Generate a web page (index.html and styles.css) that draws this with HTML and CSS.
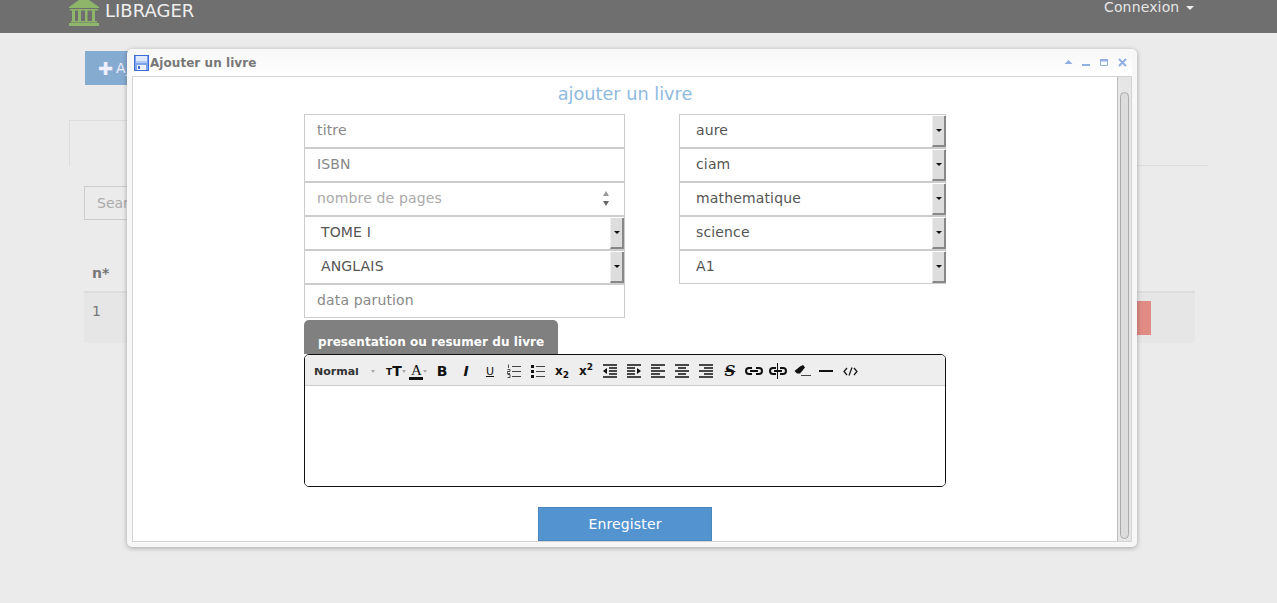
FILE: index.html
```html
<!DOCTYPE html>
<html lang="fr">
<head>
    <meta charset="UTF-8">
    <meta name="viewport" content="width=device-width, initial-scale=1.0">
    <title>Librager</title>
    <link rel="stylesheet" href="styles.css">
</head>
<body>
    <header class="navbar">
        <div class="brand">
            <svg class="brand-icon" width="32" height="26" viewBox="0 0 32 26">
                <path fill="#8fb56b" d="M11 0 L21 0 L31 7 L31 8 L1 8 L1 7 Z"/>
                <rect fill="#8fb56b" x="2" y="9" width="28" height="1.5"/>
                <rect fill="#8fb56b" x="4" y="10" width="3" height="11"/>
                <rect fill="#8fb56b" x="10" y="10" width="3" height="11"/>
                <rect fill="#8fb56b" x="17" y="10" width="2.500" height="11"/>
                <rect fill="#8fb56b" x="24" y="10" width="3" height="11"/>
                <rect fill="#8fb56b" x="3" y="21" width="26" height="1.500"/>
                <rect fill="#8fb56b" x="1" y="23" width="30" height="3"/>
            </svg>
            <span>LIBRAGER</span>
        </div>
        <div class="login">Connexion <span class="caret"></span></div>
    </header>

    <main class="page">
        <button class="add-btn" type="button"><span class="plus">✚</span>Ajouter</button>
        <div class="tabs"><div class="tab"></div></div>
        <input class="search" type="text" placeholder="Search">
        <div class="table-head">n*</div>
        <div class="table-row">
            <span class="row-num">1</span>
            <span class="del-btn"></span>
        </div>
    </main>

    <section class="dialog">
        <div class="dialog-title">
            <svg width="15" height="16" viewBox="0 0 15 16">
                <rect x="0.5" y="0.5" width="14" height="15" fill="#7fa3ec" stroke="#3f6bd8"/>
                <rect x="2" y="1" width="11" height="7" fill="#dfe9fb"/>
                <rect x="2" y="6" width="11" height="2" fill="#b4c9f2"/>
                <rect x="3" y="10" width="9" height="5" fill="#eef2fb"/>
                <rect x="4" y="11" width="2" height="3" fill="#3f6bd8"/>
            </svg>
            <span class="dialog-name">Ajouter un livre</span>
            <div class="dialog-actions">
                <svg width="9" height="9" viewBox="0 0 9 9"><path fill="#8fb0e0" d="M0.5 6 L4.500 2 L8.500 6 Z"/></svg>
                <svg width="9" height="9" viewBox="0 0 9 9"><rect fill="#8fb0e0" y="6" width="8" height="2"/></svg>
                <svg width="9" height="9" viewBox="0 0 9 9"><path fill="none" stroke="#8fb0e0" d="M0.5 1.500 H7.500 V7.500 H0.5 Z"/><rect fill="#8fb0e0" y="1" width="8" height="2.500"/></svg>
                <svg width="9" height="9" viewBox="0 0 9 9"><path fill="none" stroke="#8fb0e0" stroke-width="2" d="M1 1 L8 8 M8 1 L1 8"/></svg>
            </div>
        </div>

        <div class="dialog-body">
            <form class="book-form">
                <h2 class="form-title">ajouter un livre</h2>

                <div class="columns">
                    <div class="col col-left">
                        <input class="field" type="text" placeholder="titre">
                        <input class="field" type="text" placeholder="ISBN">
                        <div class="field spin">
                            <span class="ph">nombre de pages</span>
                            <span class="spin-arrows"><i class="up"></i><i class="down"></i></span>
                        </div>
                        <div class="field pick">TOME I<span class="pick-btn"></span></div>
                        <div class="field pick">ANGLAIS<span class="pick-btn"></span></div>
                        <input class="field" type="text" placeholder="data parution">
                    </div>
                    <div class="col col-right">
                        <div class="field pick">aure<span class="pick-btn"></span></div>
                        <div class="field pick">ciam<span class="pick-btn"></span></div>
                        <div class="field pick">mathematique<span class="pick-btn"></span></div>
                        <div class="field pick">science<span class="pick-btn"></span></div>
                        <div class="field pick">A1<span class="pick-btn"></span></div>
                    </div>
                </div>

                <div class="editor-tab">presentation ou resumer du livre</div>
                <div class="editor">
                    <div class="toolbar">
                        <span class="tb-format">Normal</span>
                        <span class="tb-format-caret"></span>
                        <span class="tb-size"><b class="t-small">T</b><b class="t-big">T</b><i class="mini-caret"></i></span>
                        <span class="tb-color">A<i class="mini-caret"></i></span>
                        <span class="tb tb-bold">B</span>
                        <span class="tb tb-italic">I</span>
                        <span class="tb tb-under">U</span>
                        <span class="tb">
                            <svg width="14" height="14" viewBox="0 0 14 14"><path stroke="#444" d="M5 2.500H14M5 7.500H14M5 12.500H14"/><path stroke="#222" d="M1.500 0.500V4M0.500 5.500H3V7.500H0.500V9.500H3M0.500 10.500H3V13.500H0.500" fill="none" stroke-width=".8"/></svg>
                        </span>
                        <span class="tb">
                            <svg width="14" height="14" viewBox="0 0 14 14"><path stroke="#444" d="M5 2.500H14M5 7.500H14M5 12.500H14"/><path fill="#111" d="M0 1h3v3H0zM0 6h3v3H0zM0 11h3v3H0z"/></svg>
                        </span>
                        <span class="tb tb-script"><span>x<sub>2</sub></span></span>
                        <span class="tb tb-script"><span>x<sup>2</sup></span></span>
                        <span class="tb">
                            <svg width="14" height="14" viewBox="0 0 14 14"><path stroke="#111" stroke-width="1.400" d="M0 1H14M6 4H14M6 7H14M6 10H14M0 13H14"/><path fill="#111" d="M4 4V10L0 7Z"/></svg>
                        </span>
                        <span class="tb">
                            <svg width="14" height="14" viewBox="0 0 14 14"><path stroke="#111" stroke-width="1.400" d="M0 1H14M0 4H8M0 7H8M0 10H8M0 13H14"/><path fill="#111" d="M10 4V10L14 7Z"/></svg>
                        </span>
                        <span class="tb">
                            <svg width="14" height="14" viewBox="0 0 14 14"><path stroke="#111" stroke-width="1.400" d="M0 1H14M0 4H9M0 7H14M0 10H9M0 13H14"/></svg>
                        </span>
                        <span class="tb">
                            <svg width="14" height="14" viewBox="0 0 14 14"><path stroke="#111" stroke-width="1.400" d="M0 1H14M3 4H11M0 7H14M3 10H11M0 13H14"/></svg>
                        </span>
                        <span class="tb">
                            <svg width="14" height="14" viewBox="0 0 14 14"><path stroke="#111" stroke-width="1.400" d="M0 1H14M5 4H14M0 7H14M5 10H14M0 13H14"/></svg>
                        </span>
                        <span class="tb tb-strike">S</span>
                        <span class="tb">
                            <svg width="18" height="8" viewBox="0 0 18 8"><path fill="none" stroke="#111" stroke-width="2" d="M7 1H4a3 3 0 0 0 0 6H7M11 1h3a3 3 0 0 1 0 6H11M5 4H13"/></svg>
                        </span>
                        <span class="tb">
                            <svg width="18" height="16" viewBox="0 0 18 16"><path fill="none" stroke="#111" stroke-width="2" d="M7 5H4a3 3 0 0 0 0 6H7M11 5h3a3 3 0 0 1 0 6H11M5 8H13"/><path stroke="#111" d="M8.500 0V16"/></svg>
                        </span>
                        <span class="tb">
                            <svg width="17" height="12" viewBox="0 0 17 12"><path fill="#111" d="M6 1.500L9 0L11 2.500L6 8.500H3L0.500 6Z"/><path stroke="#444" d="M7 10.500H17"/></svg>
                        </span>
                        <span class="tb">
                            <svg width="14" height="14" viewBox="0 0 14 14"><rect y="6" width="14" height="2" fill="#111"/></svg>
                        </span>
                        <span class="tb">
                            <svg width="15" height="9" viewBox="0 0 15 9"><path fill="none" stroke="#111" stroke-width="1.200" d="M4 1L1 4.500L4 8M11 1L14 4.500L11 8M9 0.500L6 8.500"/></svg>
                        </span>
                    </div>
                    <div class="editor-area"></div>
                </div>

                <div class="form-actions">
                    <button class="save-btn" type="button">Enregister</button>
                </div>
            </form>
            <div class="scrollbar"><div class="thumb"></div></div>
        </div>
    </section>
</body>
</html>
```

FILE: styles.css
```css
/* Base */
html, body {
    margin: 0;
    padding: 0;
    height: 100%;
}

body {
    background: #ebebeb;
    font-family: "DejaVu Sans", sans-serif;
    font-size: 14px;
    color: #555;
    overflow: hidden;
}

/* Navbar */
.navbar {
    display: flex;
    justify-content: space-between;
    height: 33px;
    padding: 0 83px 0 68px;
    background: #6f6f6f;
    color: #eee;
    overflow: hidden;
}

.brand {
    display: flex;
    align-items: flex-start;
    gap: 5px;
    font-size: 18px;
    line-height: 21px;
}

.login {
    line-height: 14px;
    color: #e6e6e6;
    letter-spacing: 0.15px;
}

.caret {
    display: inline-block;
    margin-left: 2px;
    vertical-align: middle;
    border-top: 4px solid #eee;
    border-left: 4px solid transparent;
    border-right: 4px solid transparent;
}

/* Page behind the dialog */
.page {
    padding: 18px 82px 0 84px;
}

.add-btn {
    display: block;
    width: 120px;
    height: 34px;
    margin-left: 1px;
    padding: 0 0 0 13px;
    border: none;
    background: #86abd0;
    color: #eef;
    font: 14px "DejaVu Sans", sans-serif;
    text-align: left;
}

.plus {
    margin-right: 3px;
    font-size: 18px;
    vertical-align: -2px;
}

.tabs {
    height: 45px;
    margin: 35px -13px 0 -15px;
    border-bottom: 1px solid #ddd;
}

.tab {
    width: 100px;
    height: 46px;
    border: 1px solid #ddd;
    border-bottom: none;
    box-sizing: border-box;
    background: #ebebeb;
}

.search {
    display: block;
    box-sizing: border-box;
    width: 200px;
    height: 34px;
    margin-top: 20px;
    padding: 0 12px;
    border: 1px solid #ccc;
    background: #ebebeb;
    font: 14px "DejaVu Sans", sans-serif;
}

.search::placeholder {
    color: #aaa;
}

.table-head {
    height: 73px;
    padding: 0 8px;
    box-sizing: border-box;
    line-height: 106px;
    font-weight: bold;
    color: #777;
    border-bottom: 2px solid #ddd;
}

.table-row {
    display: flex;
    justify-content: space-between;
    align-items: flex-start;
    height: 50px;
    padding: 8px 44px 0 8px;
    box-sizing: border-box;
    background: #e6e6e6;
    color: #777;
}

.row-num {
    margin-top: 2px;
}

.del-btn {
    width: 120px;
    height: 34px;
    background: #e08c84;
}

/* Dialog window */
.dialog {
    position: absolute;
    left: 127px;
    top: 49px;
    width: 1010px;
    height: 498px;
    box-sizing: border-box;
    padding: 0 5px 5px;
    background: #f7f7f7;
    border-radius: 5px;
    box-shadow: 0 1px 5px rgba(0, 0, 0, 0.3);
}

.dialog-title {
    display: flex;
    align-items: center;
    height: 27px;
    padding: 0 0 0 2px;
    background: linear-gradient(#f7f7f7, #ffffff);
}

.dialog-name {
    margin-left: 1px;
    font-size: 12px;
    font-weight: bold;
    color: #777;
    letter-spacing: 0.05px;
}

.dialog-actions {
    display: flex;
    gap: 9px;
    margin-left: auto;
    padding-right: 5px;
}

.dialog-body {
    display: flex;
    height: 464px;
    border: 1px solid #d4d4d4;
    background: #fff;
    overflow: hidden;
}

.scrollbar {
    flex: none;
    width: 14px;
    padding: 15px 0 2px 2px;
    box-sizing: border-box;
    background: #e6e6e6;
    border-left: 1px solid #bbb;
}

.thumb {
    width: 9px;
    height: 100%;
    box-sizing: border-box;
    border: 1px solid #aaa;
    border-radius: 5px;
    background: #dcdcdc;
}

/* Form */
.book-form {
    flex: 1;
    padding: 0 171px;
}

.form-title {
    margin: 6px 0 9px;
    font-size: 17.7px;
    font-weight: normal;
    line-height: 22px;
    text-align: center;
    color: #8ebadf;
}

.columns {
    display: flex;
    justify-content: space-between;
    align-items: flex-start;
    height: 206px;
}

.col {
    display: flex;
    flex-direction: column;
}

.col-left {
    width: 321px;
}

.col-right {
    width: 267px;
}

.field {
    box-sizing: border-box;
    display: flex;
    align-items: center;
    width: 100%;
    height: 34px;
    padding: 0 12px 2px;
    border: 1px solid #ccc;
    background: #fff;
    color: #555;
    font: 14px "DejaVu Sans", sans-serif;
    letter-spacing: 0.15px;
}

.field::placeholder {
    color: #888;
}

.spin {
    justify-content: space-between;
}

.ph {
    color: #aaa;
}

.spin-arrows {
    display: flex;
    flex-direction: column;
    gap: 5px;
    margin-right: 3px;
}

.spin-arrows i {
    display: block;
    border-left: 3px solid transparent;
    border-right: 3px solid transparent;
}

.spin-arrows .up {
    border-bottom: 5px solid #999;
}

.spin-arrows .down {
    border-top: 5px solid #666;
}

.pick {
    position: relative;
    padding-left: 16px;
}

/* fake select arrow button */
.pick-btn {
    position: absolute;
    top: 1px;
    right: 0;
    bottom: 0;
    width: 14px;
    box-sizing: border-box;
    display: flex;
    align-items: center;
    justify-content: center;
    background: #ddd;
    border-left: 1px solid #eee;
    border-right: 2px solid #888;
    border-bottom: 2px solid #888;
}

.col-right .pick-btn {
    right: -1px;
}

.pick-btn::after {
    content: "";
    border-top: 3px solid #111;
    border-left: 3px solid transparent;
    border-right: 3px solid transparent;
}

/* Editor */
.editor-tab {
    width: 254px;
    height: 34px;
    box-sizing: border-box;
    padding-left: 14px;
    border-radius: 5px 5px 0 0;
    background: #808080;
    color: #fff;
    font-size: 12px;
    font-weight: bold;
    line-height: 44px;
    letter-spacing: 0.07px;
    white-space: nowrap;
    overflow: hidden;
}

.editor {
    box-sizing: border-box;
    height: 133px;
    border: 1px solid #111;
    border-radius: 5px;
    overflow: hidden;
}

.toolbar {
    display: flex;
    align-items: center;
    height: 31px;
    box-sizing: border-box;
    padding-top: 2px;
    background: #eee;
    border-bottom: 1px solid #ccc;
    color: #111;
}

/* the format label is cut off by its box in the original too */
.tb-format {
    align-self: flex-start;
    width: 57px;
    height: 7px;
    margin: 11px 0 0 9px;
    overflow: hidden;
    font-size: 11px;
    font-weight: bold;
    line-height: 8px;
    color: #333;
}

.tb-format-caret,
.mini-caret {
    display: inline-block;
    border-top: 3px solid #aaa;
    border-left: 2px solid transparent;
    border-right: 2px solid transparent;
}

.tb-format-caret {
    margin-right: 11px;
}

.tb-size {
    display: flex;
    align-items: flex-end;
    width: 23px;
}

.t-small {
    font-size: 9px;
    line-height: 11px;
}

.t-big {
    font-size: 14px;
    line-height: 14px;
}

.tb-size .mini-caret {
    align-self: center;
}

.tb-color {
    width: 21px;
    height: 17px;
    box-sizing: border-box;
    padding-left: 2px;
    font-family: "Liberation Serif", serif;
    font-size: 15px;
    line-height: 14px;
    background: linear-gradient(#111, #111) 0 14px / 14px 3px no-repeat;
}

.tb-color .mini-caret {
    vertical-align: middle;
    margin-left: 1px;
}

.tb {
    display: flex;
    align-items: center;
    justify-content: center;
    width: 24px;
    height: 17px;
    font-size: 13px;
}

.tb-bold {
    font-weight: bold;
    font-size: 14px;
}

.tb-italic {
    font-weight: bold;
    font-style: italic;
    font-size: 14px;
}

.tb-under {
    text-decoration: underline;
    font-size: 11px;
}

.tb-script {
    font-size: 12px;
    font-weight: bold;
}

.tb-script sub,
.tb-script sup {
    font-size: 9px;
    line-height: 0;
}

.tb-strike {
    font-family: "DejaVu Serif", serif;
    font-style: italic;
    font-weight: bold;
    font-size: 15px;
    text-decoration: line-through;
}

.editor-area {
    height: 100px;
    background: #fff;
}

.form-actions {
    display: flex;
    justify-content: center;
    margin-top: 20px;
}

.save-btn {
    width: 174px;
    height: 34px;
    padding: 0;
    border: 1px solid #4a87bd;
    background: #5394d0;
    color: #fff;
    font: 14px "DejaVu Sans", sans-serif;
    letter-spacing: 0.15px;
}
```
